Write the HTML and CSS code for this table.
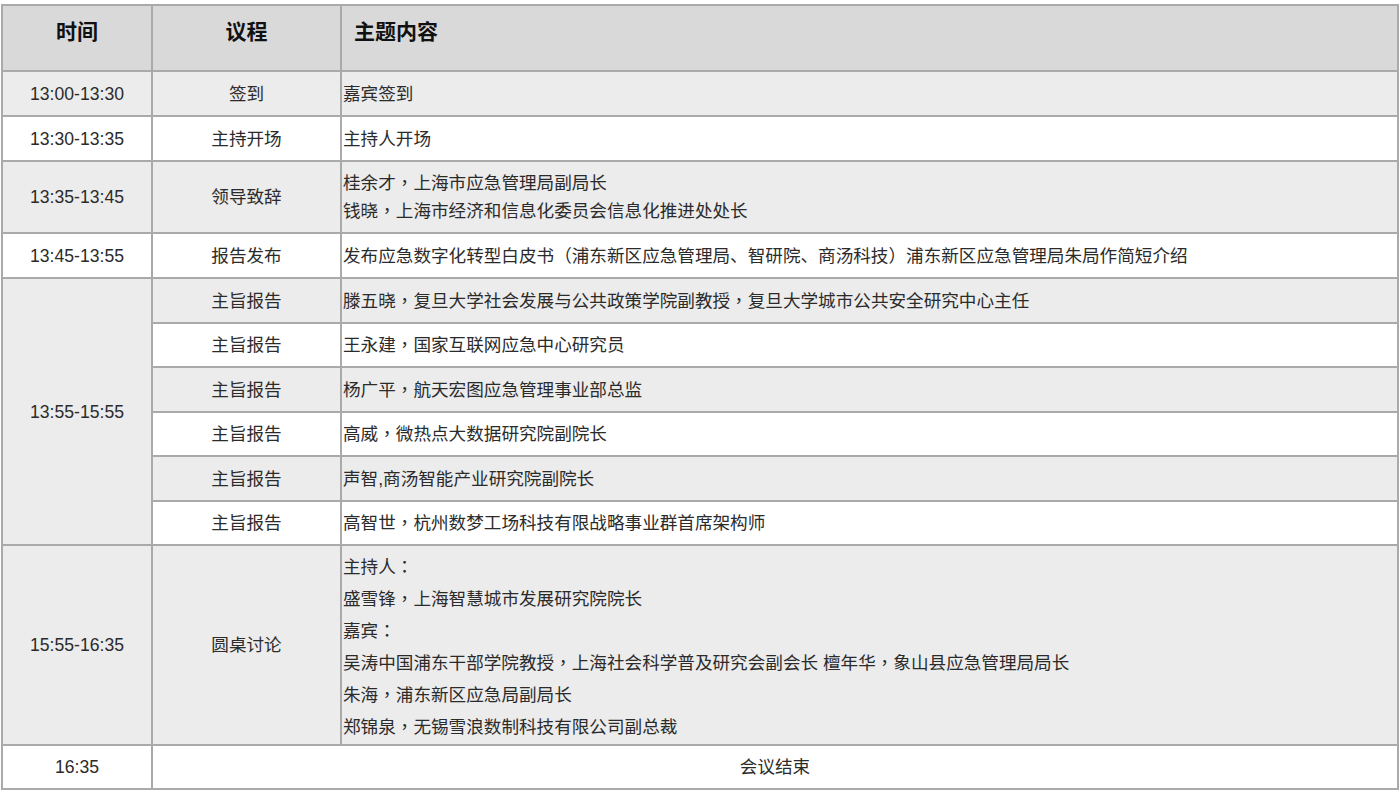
FILE: index.html
```html
<!DOCTYPE html>
<html lang="zh-CN">
<head>
<meta charset="utf-8">
<title>议程</title>
<link rel="stylesheet" href="styles.css">
</head>
<body>
<table class="agenda">
  <colgroup>
    <col class="c-time">
    <col class="c-item">
    <col class="c-topic">
  </colgroup>
  <thead>
    <tr>
      <th class="h-center">时间</th>
      <th class="h-center">议程</th>
      <th class="h-left">主题内容</th>
    </tr>
  </thead>
  <tbody>
    <tr>
      <td class="center">13:00-13:30</td>
      <td class="center">签到</td>
      <td class="topic">嘉宾签到</td>
    </tr>
    <tr>
      <td class="center">13:30-13:35</td>
      <td class="center">主持开场</td>
      <td class="topic">主持人开场</td>
    </tr>
    <tr class="tall">
      <td class="center">13:35-13:45</td>
      <td class="center">领导致辞</td>
      <td class="topic two">桂余才<span class="p" lang="zh-Hant">，</span>上海市应急管理局副局长<br>钱晓<span class="p" lang="zh-Hant">，</span>上海市经济和信息化委员会信息化推进处处长</td>
    </tr>
    <tr>
      <td class="center">13:45-13:55</td>
      <td class="center">报告发布</td>
      <td class="topic">发布应急数字化转型白皮书<span class="p" lang="zh-Hant">（</span>浦东新区应急管理局、智研院、商汤科技<span class="p" lang="zh-Hant">）</span>浦东新区应急管理局朱局作简短介绍</td>
    </tr>
    <tr>
      <td class="center" rowspan="6">13:55-15:55</td>
      <td class="center">主旨报告</td>
      <td class="topic">滕五晓<span class="p" lang="zh-Hant">，</span>复旦大学社会发展与公共政策学院副教授<span class="p" lang="zh-Hant">，</span>复旦大学城市公共安全研究中心主任</td>
    </tr>
    <tr class="short">
      <td class="center">主旨报告</td>
      <td class="topic">王永建<span class="p" lang="zh-Hant">，</span>国家互联网应急中心研究员</td>
    </tr>
    <tr>
      <td class="center">主旨报告</td>
      <td class="topic">杨广平<span class="p" lang="zh-Hant">，</span>航天宏图应急管理事业部总监</td>
    </tr>
    <tr class="short">
      <td class="center">主旨报告</td>
      <td class="topic">高威<span class="p" lang="zh-Hant">，</span>微热点大数据研究院副院长</td>
    </tr>
    <tr>
      <td class="center">主旨报告</td>
      <td class="topic">声智,商汤智能产业研究院副院长</td>
    </tr>
    <tr class="short">
      <td class="center">主旨报告</td>
      <td class="topic">高智世<span class="p" lang="zh-Hant">，</span>杭州数梦工场科技有限战略事业群首席架构师</td>
    </tr>
    <tr class="round">
      <td class="center">15:55-16:35</td>
      <td class="center">圆桌讨论</td>
      <td class="topic multi">
        <div class="line">主持人<span class="p" lang="zh-Hant">：</span></div>
        <div class="line">盛雪锋<span class="p" lang="zh-Hant">，</span>上海智慧城市发展研究院院长</div>
        <div class="line">嘉宾<span class="p" lang="zh-Hant">：</span></div>
        <div class="line">吴涛中国浦东干部学院教授<span class="p" lang="zh-Hant">，</span>上海社会科学普及研究会副会长 檀年华<span class="p" lang="zh-Hant">，</span>象山县应急管理局局长</div>
        <div class="line">朱海<span class="p" lang="zh-Hant">，</span>浦东新区应急局副局长</div>
        <div class="line">郑锦泉<span class="p" lang="zh-Hant">，</span>无锡雪浪数制科技有限公司副总裁</div>
      </td>
    </tr>
    <tr class="short">
      <td class="center">16:35</td>
      <td class="center" colspan="2">会议结束</td>
    </tr>
  </tbody>
</table>
</body>
</html>
```

FILE: styles.css
```css
html, body {
  margin: 0;
  padding: 0;
  background: #ffffff;
}

body {
  padding: 4px 1px 0 1px;
  font-family: "Liberation Sans", "Noto Sans CJK SC", sans-serif;
  color: #2b2b2b;
}

.agenda {
  width: 1398px;
  border-collapse: collapse;
  table-layout: fixed;
  border: 2px solid #aaaaaa;
  font-size: 17.6px;
}

.c-time { width: 150px; }
.c-item { width: 189px; }

.agenda th,
.agenda td {
  border: 2px solid #aaaaaa;
}

.agenda thead tr {
  height: 66px;
  background: #d9d9d9;
}

.agenda th {
  vertical-align: top;
  padding: 11px 0 0 0;
  font-size: 21px;
  font-weight: bold;
  color: #111111;
  line-height: 30px;
}

.h-center { text-align: center; }
.h-left { text-align: left; padding-left: 12px !important; }

.agenda tbody tr {
  height: 45px;
  background: #ffffff;
}

.agenda tbody tr:nth-child(odd) {
  background: #ececec;
}

.agenda tbody tr.short { height: 44px; }
.agenda tbody tr.tall { height: 72px; }
.agenda tbody tr.round { height: 200px; }

.agenda td {
  padding: 0;
  vertical-align: middle;
  line-height: 24px;
}

.center { text-align: center; }

.topic {
  text-align: left;
  padding-left: 1px !important;
}

.p {
  font-family: "Noto Sans CJK TC", "Noto Sans CJK SC", sans-serif;
  line-height: 1;
}

.two { line-height: 28px !important; }

.agenda td.multi { padding-top: 4px; padding-bottom: 0; }

.line { line-height: 32px; height: 32px; }
```
